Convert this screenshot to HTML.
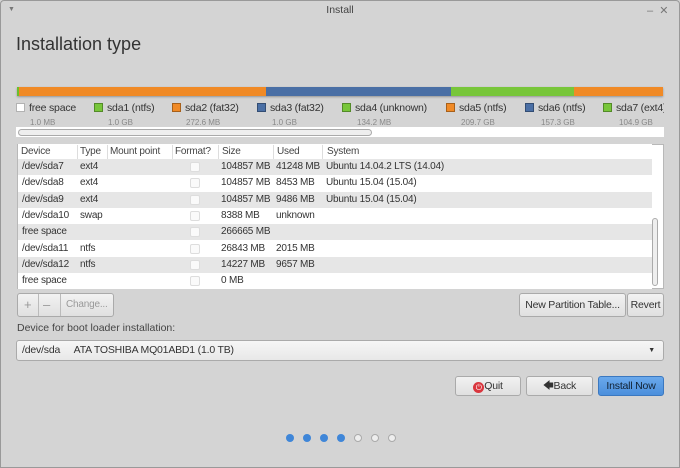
<!DOCTYPE html>
<html><head><style>
*{margin:0;padding:0;box-sizing:border-box}
body{width:680px;height:468px;background:#d4d4d4;font-family:"Liberation Sans",sans-serif;font-size:10.5px;color:#333;position:relative;overflow:hidden}
.a{position:absolute}
.win{left:0;top:0;width:680px;height:468px;border:1px solid #999;border-radius:4px 4px 0 0}
.title{left:0;top:0;width:680px;height:22px;text-align:center;line-height:20px;font-size:10.5px;color:#444}
.leg{top:102px;font-size:10.5px;color:#333;white-space:nowrap;letter-spacing:-0.2px}
.leg i{display:inline-block;width:9px;height:9px;border:1px solid rgba(0,0,0,.3);margin-right:4px;vertical-align:-1px}
.sz{top:118px;font-size:8px;color:#888}
.row{left:18px;width:634px;height:16.3px;line-height:16px;font-size:10px;letter-spacing:-0.2px}
.row span{position:absolute;top:0}
.cb{position:absolute;left:172px;top:3px;width:10px;height:10px;border:1px solid #ddd;border-radius:2px;background:#fafafa}
.btn{border:1px solid #aaa;border-radius:3px;background:linear-gradient(#f2f2f2,#e0e0e0);text-align:center;font-size:10.5px;color:#333;letter-spacing:-0.2px}
.dot{top:434px;width:8px;height:8px;border-radius:50%}
</style></head><body>
<div class="a win"></div>
<div class="a title">Install</div>
<div class="a" style="left:8px;top:6px;font-size:7px;color:#777">▼</div>
<div class="a" style="left:647px;top:4px;color:#777;font-size:11px">–&nbsp;&nbsp;✕</div>
<div class="a" style="left:16px;top:34px;font-size:18px;color:#333">Installation type</div>

<div class="a" style="left:17px;top:87px;width:646px;height:9px;display:flex;box-shadow:0 1px 2px rgba(0,0,0,.3)">
<div style="width:2px;background:#6cbf2c"></div>
<div style="width:247px;background:#f08a26"></div>
<div style="width:185px;background:#4a6fa5"></div>
<div style="width:123px;background:#78c63a"></div>
<div style="width:89px;background:#f08a26"></div>
</div>

<div class="a" style="left:0;top:0;width:664px;height:130px;overflow:hidden">
<div class="a leg" style="left:16px"><i style="background:#fff"></i>free space</div>
<div class="a sz" style="left:30px">1.0 MB</div>
<div class="a leg" style="left:94px"><i style="background:#78c63a"></i>sda1 (ntfs)</div>
<div class="a sz" style="left:108px">1.0 GB</div>
<div class="a leg" style="left:172px"><i style="background:#f08a26"></i>sda2 (fat32)</div>
<div class="a sz" style="left:186px">272.6 MB</div>
<div class="a leg" style="left:257px"><i style="background:#4a6fa5"></i>sda3 (fat32)</div>
<div class="a sz" style="left:272px">1.0 GB</div>
<div class="a leg" style="left:342px"><i style="background:#78c63a"></i>sda4 (unknown)</div>
<div class="a sz" style="left:357px">134.2 MB</div>
<div class="a leg" style="left:446px"><i style="background:#f08a26"></i>sda5 (ntfs)</div>
<div class="a sz" style="left:461px">209.7 GB</div>
<div class="a leg" style="left:525px"><i style="background:#4a6fa5"></i>sda6 (ntfs)</div>
<div class="a sz" style="left:541px">157.3 GB</div>
<div class="a leg" style="left:603px"><i style="background:#78c63a"></i>sda7 (ext4)</div>
<div class="a sz" style="left:619px">104.9 GB</div>
</div>

<div class="a" style="left:16px;top:127px;width:648px;height:10px;background:#fff"></div>
<div class="a" style="left:18px;top:129px;width:354px;height:7px;border:1px solid #aaa;border-radius:4px;background:#eee"></div>

<div class="a" style="left:17px;top:144px;width:647px;height:145px;background:#fff;border:1px solid #b8b8b8"></div>
<div class="a row" style="top:144px;background:#fff;color:#444">
<span style="left:3px">Device</span><span style="left:62px">Type</span><span style="left:92px">Mount point</span><span style="left:157px">Format?</span><span style="left:204px">Size</span><span style="left:259px">Used</span><span style="left:309px">System</span></div>
<div class="a" style="left:77px;top:145px;width:1px;height:15px;background:#ddd;box-shadow:30px 0 #ddd,95px 0 #ddd,141px 0 #ddd,196px 0 #ddd,245px 0 #ddd"></div>

<div class="a row" style="top:159px;background:#e6e6e6"><span style="left:4px">/dev/sda7</span><span style="left:62px">ext4</span><i class="cb"></i><span style="left:203px">104857 MB</span><span style="left:258px">41248 MB</span><span style="left:308px">Ubuntu 14.04.2 LTS (14.04)</span></div>
<div class="a row" style="top:175.3px;background:#fff"><span style="left:4px">/dev/sda8</span><span style="left:62px">ext4</span><i class="cb"></i><span style="left:203px">104857 MB</span><span style="left:258px">8453 MB</span><span style="left:308px">Ubuntu 15.04 (15.04)</span></div>
<div class="a row" style="top:191.6px;background:#e6e6e6"><span style="left:4px">/dev/sda9</span><span style="left:62px">ext4</span><i class="cb"></i><span style="left:203px">104857 MB</span><span style="left:258px">9486 MB</span><span style="left:308px">Ubuntu 15.04 (15.04)</span></div>
<div class="a row" style="top:207.9px;background:#fff"><span style="left:4px">/dev/sda10</span><span style="left:62px">swap</span><i class="cb"></i><span style="left:203px">8388 MB</span><span style="left:258px">unknown</span></div>
<div class="a row" style="top:224.2px;background:#e6e6e6"><span style="left:4px">free space</span><i class="cb"></i><span style="left:203px">266665 MB</span></div>
<div class="a row" style="top:240.5px;background:#fff"><span style="left:4px">/dev/sda11</span><span style="left:62px">ntfs</span><i class="cb"></i><span style="left:203px">26843 MB</span><span style="left:258px">2015 MB</span></div>
<div class="a row" style="top:256.8px;background:#e6e6e6"><span style="left:4px">/dev/sda12</span><span style="left:62px">ntfs</span><i class="cb"></i><span style="left:203px">14227 MB</span><span style="left:258px">9657 MB</span></div>
<div class="a row" style="top:273.1px;background:#fff"><span style="left:4px">free space</span><i class="cb"></i><span style="left:203px">0 MB</span></div>
<div class="a" style="left:652px;top:218px;width:6px;height:68px;border:1px solid #aaa;border-radius:3px;background:#eee"></div>

<div class="a btn" style="left:17px;top:293px;width:97px;height:24px;color:#999;line-height:22px;text-align:left;font-size:13px">
<span style="position:absolute;left:6px;top:0">+</span><span style="position:absolute;left:25px;top:0">–</span>
<span style="position:absolute;left:48px;top:0;font-size:10px">Change...</span>
<i style="position:absolute;left:20px;top:0;width:1px;height:22px;background:#bbb"></i><i style="position:absolute;left:42px;top:0;width:1px;height:22px;background:#bbb"></i></div>
<div class="a btn" style="left:519px;top:293px;width:107px;height:24px;line-height:22px">New Partition Table...</div>
<div class="a btn" style="left:627px;top:293px;width:37px;height:24px;line-height:22px">Revert</div>

<div class="a" style="left:17px;top:322px;color:#444">Device for boot loader installation:</div>
<div class="a btn" style="left:16px;top:340px;width:648px;height:21px;line-height:19px;text-align:left;padding-left:5px;background:linear-gradient(#f6f6f6,#e8e8e8)">/dev/sda&nbsp;&nbsp;&nbsp;&nbsp;&nbsp;ATA TOSHIBA MQ01ABD1 (1.0 TB)<span style="position:absolute;right:8px;top:0;font-size:7px">▼</span></div>

<div class="a btn" style="left:455px;top:376px;width:66px;height:20px;line-height:18px"><span style="display:inline-block;width:11px;height:11px;border-radius:50%;background:#d9363e;color:#fff;font-size:8px;line-height:11px;vertical-align:-1px">⏻</span>Quit</div>
<div class="a btn" style="left:526px;top:376px;width:67px;height:20px;line-height:18px">🡄Back</div>
<div class="a btn" style="left:598px;top:376px;width:66px;height:20px;line-height:18px;background:linear-gradient(#6aa9ec,#4b8fdc);border-color:#3b78c0;color:#123">Install Now</div>

<div class="a dot" style="left:286px;background:#3f86d8"></div>
<div class="a dot" style="left:303px;background:#3f86d8"></div>
<div class="a dot" style="left:320px;background:#3f86d8"></div>
<div class="a dot" style="left:337px;background:#3f86d8"></div>
<div class="a dot" style="left:354px;border:1px solid #aaa;background:#eee"></div>
<div class="a dot" style="left:371px;border:1px solid #aaa;background:#eee"></div>
<div class="a dot" style="left:388px;border:1px solid #aaa;background:#eee"></div>
</body></html>
